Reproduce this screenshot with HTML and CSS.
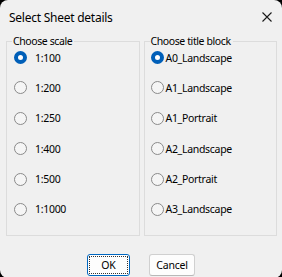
FILE: index.html
```html
<!DOCTYPE html>
<html>
<head>
<meta charset="utf-8">
<link rel="stylesheet" href="styles.css">
</head>
<body>
<div class="window">
  <div class="titlebar">
    <span class="title">Select Sheet details</span>
    <svg class="close" width="10" height="10" viewBox="0 0 10 10"><path d="M0.5 0.5 L9.5 9.5 M9.5 0.5 L0.5 9.5" stroke="#1a1a1a" stroke-width="1.1" fill="none"/></svg>
  </div>
  <div class="groups">
    <fieldset class="group left">
      <legend>Choose scale</legend>
      <div class="list">
        <label class="row"><span class="radio on"></span><span class="lbl">1:100</span></label>
        <label class="row"><span class="radio"></span><span class="lbl">1:200</span></label>
        <label class="row"><span class="radio"></span><span class="lbl">1:250</span></label>
        <label class="row"><span class="radio"></span><span class="lbl">1:400</span></label>
        <label class="row"><span class="radio"></span><span class="lbl">1:500</span></label>
        <label class="row"><span class="radio"></span><span class="lbl">1:1000</span></label>
      </div>
    </fieldset>
    <fieldset class="group right">
      <legend>Choose title block</legend>
      <div class="list">
        <label class="row"><span class="radio on"></span><span class="lbl">A0_Landscape</span></label>
        <label class="row"><span class="radio"></span><span class="lbl">A1_Landscape</span></label>
        <label class="row"><span class="radio"></span><span class="lbl">A1_Portrait</span></label>
        <label class="row"><span class="radio"></span><span class="lbl">A2_Landscape</span></label>
        <label class="row"><span class="radio"></span><span class="lbl">A2_Portrait</span></label>
        <label class="row"><span class="radio"></span><span class="lbl">A3_Landscape</span></label>
      </div>
    </fieldset>
  </div>
  <div class="buttons">
    <button class="btn ok"><span class="focus">OK</span></button>
    <button class="btn cancel">Cancel</button>
  </div>
</div>
</body>
</html>
```

FILE: styles.css
```css
html, body {
  margin: 0;
  padding: 0;
  background: #000;
}
.window {
  width: 282px;
  height: 278px;
  background: #f0f0f0;
  border-radius: 8px;
  overflow: hidden;
  font-family: "Noto Sans", "Open Sans", sans-serif;
  color: #000;
}
.titlebar {
  height: 34px;
  display: flex;
  align-items: center;
  justify-content: space-between;
  padding: 0 10px 0 9px;
  box-sizing: border-box;
}
.title {
  font-size: 12px;
  letter-spacing: -0.25px;
  color: #000;
}
.close {
  display: block;
}
.groups {
  display: flex;
  gap: 4px;
  padding: 0 5px 0 6px;
}
.group {
  width: 134px;
  box-sizing: border-box;
  margin: 0;
  padding: 0 0 10.8px 0;
  border: 1px solid #dcdcdc;
  border-radius: 0;
  min-width: 0;
}
.group legend {
  font-size: 10.5px;
  letter-spacing: -0.4px;
  line-height: 15px;
  padding: 0 2px 0 1px;
  margin-left: 5px;
  color: #000;
}
.list {
  margin-top: -6.7px;
}
.row {
  height: 30.4px;
  display: flex;
  align-items: center;
  font-size: 10.5px;
  letter-spacing: -0.3px;
}
.left .row {
  padding-left: 7px;
  gap: 8px;
}
.right .row {
  padding-left: 6px;
  gap: 2px;
}
.radio {
  width: 13px;
  height: 13px;
  box-sizing: border-box;
  border-radius: 50%;
  border: 1px solid #8a8a8a;
  background: #f5f5f5;
  flex: none;
}
.radio.on {
  border: 4px solid #005fb8;
  background: #fff;
}
.buttons {
  display: flex;
  justify-content: center;
  gap: 19px;
  margin-top: 18px;
}
.btn {
  height: 22px;
  box-sizing: border-box;
  font-family: "Noto Sans", "Open Sans", sans-serif;
  font-size: 10.5px;
  letter-spacing: -0.2px;
  color: #000;
  background: #fdfdfd;
  border-radius: 3px;
  padding: 0;
  display: flex;
  align-items: center;
  justify-content: center;
}
.ok {
  width: 43px;
  border: 1px solid #0067c0;
  padding: 1px;
}
.ok .focus {
  display: flex;
  align-items: center;
  justify-content: center;
  width: 100%;
  height: 100%;
  border: 1px dotted #333;
  box-sizing: border-box;
}
.cancel {
  width: 46px;
  border: 1px solid #d0d0d0;
  border-bottom-color: #b8b8b8;
}
```
